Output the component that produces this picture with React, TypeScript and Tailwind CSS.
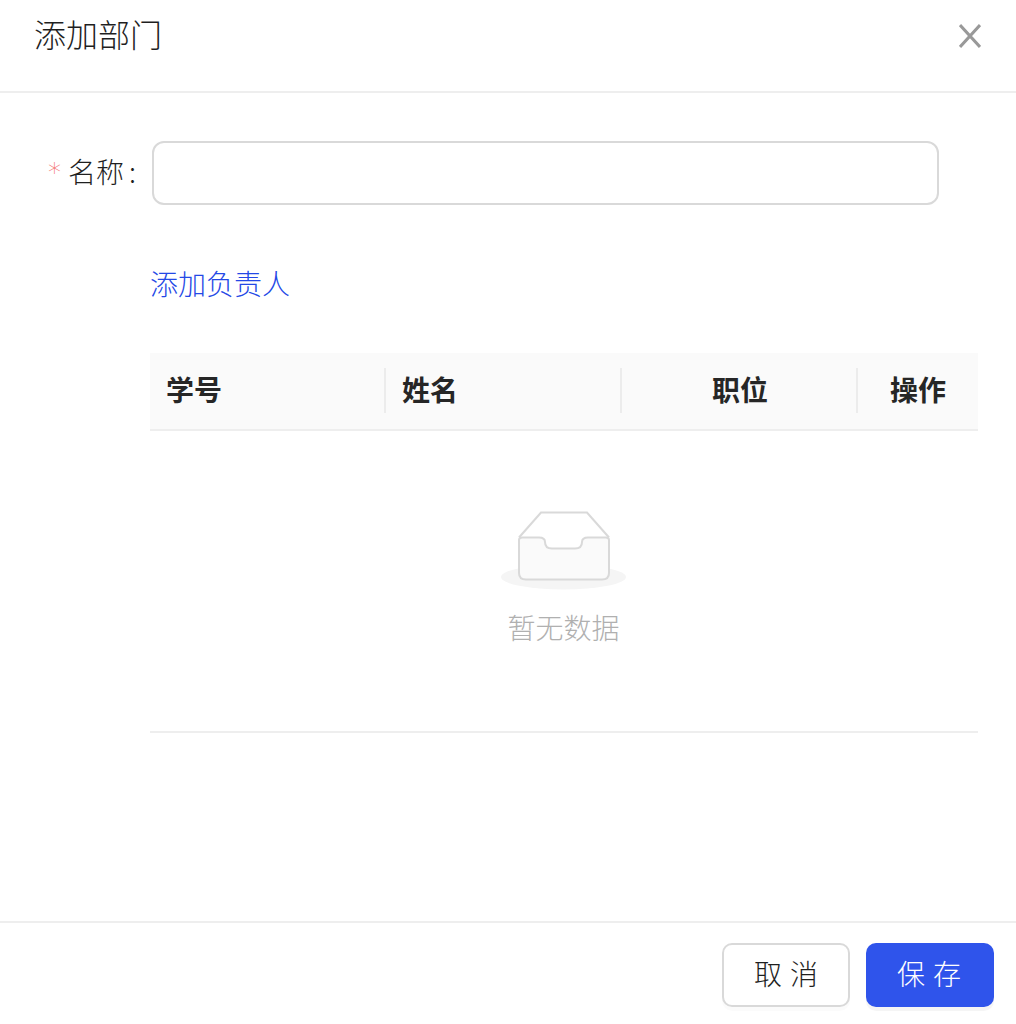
const font = { fontFamily: '"Noto Sans CJK SC", "Liberation Sans", sans-serif' };

function Th({ label, width, center, divider }: { label: string; width: string; center?: boolean; divider?: boolean }) {
  return (
    <div className={`${width} relative flex items-center px-4 pb-[4px] h-full ${center ? 'justify-center' : ''}`}>
      <span className="text-[28px] font-bold text-[#262626] leading-none">{label}</span>
      {divider && <span className="absolute right-0 top-[15px] h-[45px] w-[2px] bg-[#ececec]" />}
    </div>
  );
}

export default function App() {
  return (
    <div className="w-[1016px] h-[1024px] bg-white flex flex-col overflow-hidden" style={font}>
      <header className="h-[93px] shrink-0 border-b-2 border-[#eeeeee] flex justify-between pl-[34px] pr-[35px]">
        <h1 className="text-[32px] leading-[44px] mt-[11px] font-light text-[#1f1f1f]">添加部门</h1>
        <svg className="mt-[24px]" width="22" height="24" viewBox="0 0 22 24" fill="none" stroke="#999999" strokeWidth="3">
          <path d="M1 1 L21 23 M21 1 L1 23" />
        </svg>
      </header>

      <main className="flex-1 flex flex-col">
        <div className="mt-[48px] flex items-center h-[64px] pl-[48px]">
          <span className="text-[26px] leading-none text-[#f47272] w-[20px] font-light" style={{ fontFamily: '"DejaVu Sans", sans-serif' }}>*</span>
          <span className="text-[28px] leading-none text-[#1f1f1f] w-[84px] whitespace-nowrap font-light pb-[4px]">名称<span className="ml-[5px]">:</span></span>
          <input className="w-[787px] h-[64px] border-2 border-[#d9d9d9] rounded-[12px] bg-white" />
        </div>

        <a className="ml-[150px] mt-[58px] text-[28px] leading-[40px] text-[#2448e6] w-fit font-light">添加负责人</a>

        <div className="ml-[150px] w-[828px] mt-[50px]">
          <div className="h-[78px] bg-[#fafafa] border-b-2 border-[#eeeeee] flex">
            <Th label="学号" width="w-[236px]" divider />
            <Th label="姓名" width="w-[236px]" divider />
            <Th label="职位" width="w-[236px]" center divider />
            <Th label="操作" width="w-[120px]" center />
          </div>
          <div className="h-[302px] border-b-2 border-[#eeeeee] flex flex-col items-center pt-[79px]">
            <svg width="128" height="82" viewBox="0 0 128 82" fill="none">
              <ellipse cx="63.5" cy="67" rx="62.5" ry="12.5" fill="#f5f5f5" />
              <path d="M19 27.5 L41 2.5 L87 2.5 L109 27.5" stroke="#d9d9d9" strokeWidth="2" fill="#ffffff" />
              <path
                d="M19 30 Q19 27.5 22 27.5 L39 27.5 Q45 27.5 45 32 Q45 38.5 52 38.5 L75 38.5 Q82 38.5 82 32 Q82 27.5 88 27.5 L106 27.5 Q109 27.5 109 30 L109 63 Q109 69.5 102 69.5 L26 69.5 Q19 69.5 19 63 Z"
                stroke="#d9d9d9"
                strokeWidth="2"
                fill="#fafafa"
              />
            </svg>
            <p className="text-[28px] leading-[40px] mt-[15px] -ml-px text-[#b0b0b0] font-light">暂无数据</p>
          </div>
        </div>
      </main>

      <footer className="h-[103px] shrink-0 border-t-2 border-[#eeeeee] flex justify-end gap-4 pt-[20px] pr-[22px]">
        <button className="w-[128px] h-[64px] border-2 border-[#d9d9d9] rounded-[10px] bg-white text-[28px] text-[#1f1f1f] shadow-[0_4px_0_rgba(0,0,0,0.015)] tracking-[8px] pl-[8px] pb-[4px] font-light">取消</button>
        <button className="w-[128px] h-[64px] rounded-[10px] bg-[#2f54eb] text-[28px] text-white shadow-[0_4px_0_rgba(0,0,0,0.04)] tracking-[8px] pl-[6px] pb-[4px] font-light">保存</button>
      </footer>
    </div>
  );
}
